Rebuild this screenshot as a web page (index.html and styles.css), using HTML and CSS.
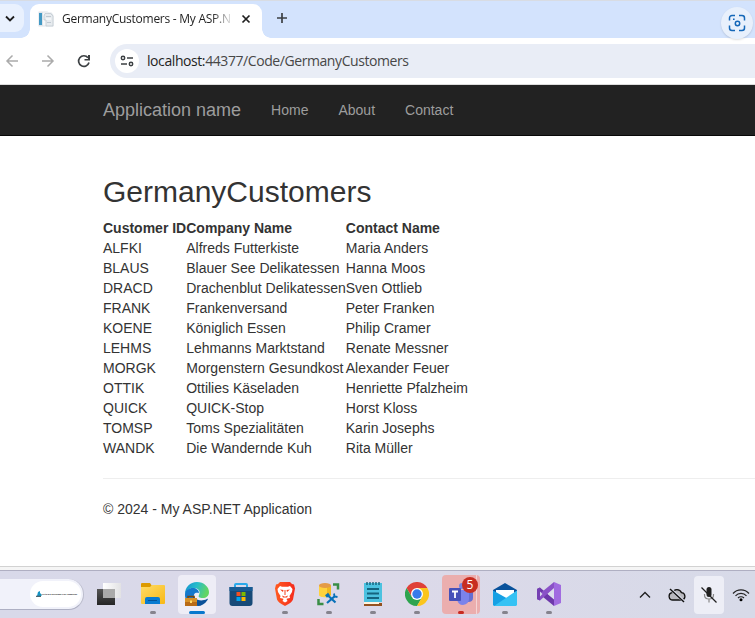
FILE: index.html
```html
<!DOCTYPE html>
<html lang="en">
<head>
<meta charset="utf-8">
<title>GermanyCustomers - My ASP.NET Application</title>
<link rel="stylesheet" href="styles.css">
</head>
<body>
<div class="tabstrip">
  <div class="tab-search"><svg width="24" height="28" viewBox="0 0 24 28"><path d="M6 12.500l4 4 4-4" fill="none" stroke="#1f1f1f" stroke-width="1.800"/></svg></div>
  <div class="tab">
    <svg class="favicon" width="16" height="16" viewBox="0 0 16 16"><path d="M.500.500h9l1 1h3l2 2.500v11.500H.500z" fill="#dfe4e9"/><path d="M1 2h3v12H1z" fill="#4399c4"/><path d="M5 1.500h5v13H5z" fill="#f6f8fa"/><path d="M7 2.500h5.500L15 5v10H8V9H6V5z" fill="#e7ebef" stroke="#bdc5cd" stroke-width=".7"/><path d="M8 5.500h5M9 11.500h4" stroke="#c0c9d1"/><path d="M8 8h5" stroke="#fff"/></svg>
    <span class="tab-title">GermanyCustomers - My ASP.N</span>
    <svg class="close" width="10" height="10" viewBox="0 0 10 10"><path d="M1.500 1.500l7 7m0-7l-7 7" stroke="#1f1f1f" stroke-width="1.700"/></svg>
  </div>
  <svg class="newtab" width="12" height="12" viewBox="0 0 12 12"><path d="M6 1v10M1 6h10" stroke="#3c4043" stroke-width="1.700"/></svg>
</div>
<div class="toolbar">
  <svg width="110" height="46" viewBox="0 0 110 46" fill="none"><g stroke="#ababab" stroke-width="1.500"><path d="M18 23H7m5.500-5.500L7 23l5.500 5.500M42 23h11m-5.500-5.500L53 23l-5.500 5.500"/></g><path d="M88 19.700a5.300 5.300 0 1 0 1 4.800" stroke="#3c4043" stroke-width="1.700"/><path d="M90 17v5.500h-5.500V21H88v-4z" fill="#3c4043"/></svg>
  <div class="address">
    <div class="siteinfo"><svg width="14" height="14" viewBox="0 0 14 14" fill="none" stroke="#3c4043" stroke-width="1.500"><circle cx="3" cy="4" r="1.700"/><path d="M7 4h6M1 10h6"/><circle cx="11" cy="10" r="1.700"/></svg></div>
    <span class="url"><b>localhost:</b>44377/Code/GermanyCustomers</span>
  </div>
</div>
<div class="lens"><svg width="18" height="18" viewBox="0 0 18 18" fill="none" stroke="#1467b8" stroke-width="1.500"><path d="M1.500 6.500V4a2.500 2.500 0 0 1 2.500-2.500h3M11 1.500h3A2.500 2.500 0 0 1 16.500 4v2.500M16.500 11.500V14a2.500 2.500 0 0 1-2.500 2.500h-3M7 16.500H4A2.500 2.500 0 0 1 1.500 14v-2.500"/><circle cx="9.500" cy="9.500" r="2.200"/><path d="M5 5.300h1.600"/></svg></div>
<header class="navbar">
  <a class="brand">Application name</a>
  <nav><a>Home</a><a>About</a><a>Contact</a></nav>
</header>
<main class="content">
  <h2>GermanyCustomers</h2>
  <table>
    <tr><th>Customer ID</th><th>Company Name</th><th>Contact Name</th></tr>
    <tr><td>ALFKI</td><td>Alfreds Futterkiste</td><td>Maria Anders</td></tr>
    <tr><td>BLAUS</td><td>Blauer See Delikatessen</td><td>Hanna Moos</td></tr>
    <tr><td>DRACD</td><td>Drachenblut Delikatessen</td><td>Sven Ottlieb</td></tr>
    <tr><td>FRANK</td><td>Frankenversand</td><td>Peter Franken</td></tr>
    <tr><td>KOENE</td><td>Königlich Essen</td><td>Philip Cramer</td></tr>
    <tr><td>LEHMS</td><td>Lehmanns Marktstand</td><td>Renate Messner</td></tr>
    <tr><td>MORGK</td><td>Morgenstern Gesundkost</td><td>Alexander Feuer</td></tr>
    <tr><td>OTTIK</td><td>Ottilies Käseladen</td><td>Henriette Pfalzheim</td></tr>
    <tr><td>QUICK</td><td>QUICK-Stop</td><td>Horst Kloss</td></tr>
    <tr><td>TOMSP</td><td>Toms Spezialitäten</td><td>Karin Josephs</td></tr>
    <tr><td>WANDK</td><td>Die Wandernde Kuh</td><td>Rita Müller</td></tr>
  </table>
  <hr>
  <footer>© 2024 - My ASP.NET Application</footer>
</main>
<div class="window-edge"></div>
<div class="taskbar">
  <div class="search"><div class="highlight"><svg width="6" height="6" viewBox="0 0 6 6"><path d="M2 1l2-1v2l2 2-1 1H1z" fill="#1593c4"/><path d="M0 4.700h5V6H0z" fill="#4b6470"/></svg><span>Let's Do Everyday Like Someone</span></div></div>
  <div class="apps">
    <div class="app"><svg width="24" height="24" viewBox="0 0 24 24"><defs><linearGradient id="tv" x2="0" y2="1"><stop stop-color="#555"/><stop offset="1" stop-color="#252525"/></linearGradient><linearGradient id="tw"><stop stop-color="#fff"/><stop offset="1" stop-color="#e2e2e4"/></linearGradient></defs><path d="M6 1h18v15H6z" fill="url(#tw)"/><path d="M0 7h18v16H0z" fill="url(#tv)"/><path d="M6 7h12v9H6z" fill="#aaa"/></svg></div>
    <div class="app run"><svg width="24" height="24" viewBox="0 0 24 24"><defs><linearGradient id="fo" x2="1" y2="1"><stop stop-color="#ffdc68"/><stop offset="1" stop-color="#f8b814"/></linearGradient></defs><path d="M0 2q0-1 1-1h8l2 3-2 3H0z" fill="#dc9a00"/><path d="M0 5h9l2-2h12q1 0 1 1v17q0 1-1 1H1q-1 0-1-1z" fill="url(#fo)"/><path d="M4 22v-5q0-2 2-2h11q2 0 2 2v5z" fill="#087bd1"/><path d="M7 18.500h9" stroke="#035397"/></svg></div>
    <div class="app active"><svg width="24" height="24" viewBox="0 0 24 24"><defs><linearGradient id="ed" x2="1" y2=".3"><stop stop-color="#1590cf"/><stop offset=".5" stop-color="#26bccb"/><stop offset="1" stop-color="#62d563"/></linearGradient></defs><path d="M0 12C0 5 5 0 12 0s12 5 12 10c0 4-3 6-6 6-4 0-5-1-4-3 2-4-1-7-5-7-5 0-9 3-9 8z" fill="url(#ed)"/><path d="M0 13c0-5 4-7 8-7 3 0 6 2 6 5-4-1-6 1-5 5 1 5 6 8 9 6-3 2-7 2-10 1C3 22 0 18 0 13z" fill="#1478cc"/><path d="M9 13c0 5 7 7 13 4 1-.5 1 0 .500 1C20 22 16 24 13 24c-5-1-6-8-4-11z" fill="#0b5299"/><path d="M3 16v-1.500h6V16" fill="none" stroke="#774710" stroke-width="1.500"/><path d="M0 16h12v8H0z" fill="#b86b17"/><path d="M0 16h12v4H0z" fill="#d79128"/><path d="M5 18.500h2V21H5z" fill="#ffdb68"/></svg></div>
    <div class="app"><svg width="24" height="24" viewBox="0 0 24 24"><path d="M6 6V3q0-1 1-1h10q1 0 1 1v3" fill="none" stroke="#29a9ea" stroke-width="2"/><path d="M.500 5h23v16q0 3-3 3h-17q-3 0-3-3z" fill="#174a78"/><path d="M.500 5h23v4H.500z" fill="#175b94"/><path d="M7.500 10h4v4h-4z" fill="#f25022"/><path d="M12.500 10h4v4h-4z" fill="#7fba00"/><path d="M7.500 15h4v4h-4z" fill="#00a4ef"/><path d="M12.500 15h4v4h-4z" fill="#ffb900"/></svg></div>
    <div class="app run"><svg width="24" height="24" viewBox="0 0 24 24"><defs><linearGradient id="br"><stop stop-color="#ff5a20"/><stop offset="1" stop-color="#f52b1c"/></linearGradient></defs><path d="M7 0h10l2 2 2 .500 1 4-2 11q-1 3-8 6.500-7-3.500-8-6.500L2 6.500l1-4L5 2z" fill="url(#br)"/><path d="M7 4l2 .700h6l2-.700 2.500 3-.500 3-2.500 4 .500 2-2.500.500-1 .500 1 2-2.500 1.500L9.500 19l1-2-1-.500L7 16l.500-2L5 10l-.500-3z" fill="#fff"/><path d="M7 7.500l3.500.500-.500 2zM17 7.500l-3.500.500.500 2zM11.500 8h1v5h-1zM9 13.500l3 1.200 3-1.200-1 2h-4z" fill="#f4401d"/></svg></div>
    <div class="app run"><svg width="24" height="24" viewBox="0 0 24 24"><path d="M16 2.500h5v5M1.500 17v5h5" fill="none" stroke="#398d45" stroke-width="2.500"/><path d="M2 3.500v9.500c0 3 12 3 12 0V3.500" fill="#ffd23d"/><path d="M10 3.500h4V13l-4 2z" fill="#f1b91f"/><ellipse cx="8" cy="3.500" rx="6" ry="2.500" fill="#e49b47"/><path d="M11.500 14l7 6.500M18 14l-8 7" stroke="#0871b9" stroke-width="2.200"/><path d="M9 14.500l3-2.500" stroke="#0871b9" stroke-width="3"/><path d="M17 11.500l.500 3 3 .500" fill="none" stroke="#0871b9" stroke-width="1.800"/></svg></div>
    <div class="app run"><svg width="24" height="24" viewBox="0 0 24 24"><path d="M3 21h18v3H3z" fill="#94511f"/><path d="M3 19h15v3H3z" fill="#fff4df"/><path d="M3 1h18v19H3z" fill="#4cc2e0"/><path d="M6 0v3M9 0v3M12 0v3M15 0v3M18 0v3" stroke="#17627b" stroke-width="1.400"/><path d="M6 7h12M6 11.500h12M6 16h12" stroke="#14647f" stroke-width="1.800"/></svg></div>
    <div class="app run"><svg width="24" height="24" viewBox="0 0 24 24"><path d="M1.600 6A12 12 0 0 1 22.400 6H12L6.800 15z" fill="#df4138"/><path d="M1.600 6A12 12 0 0 0 12 24l5.200-9H6.800z" fill="#2da44e"/><path d="M22.400 6A12 12 0 0 1 12 24l5.200-9L12 6z" fill="#fbc51d"/><circle cx="12" cy="12" r="6" fill="#fff"/><circle cx="12" cy="12" r="4.700" fill="#367bea"/></svg></div>
    <div class="app teams run"><svg width="24" height="24" viewBox="0 0 24 24"><circle cx="13" cy="4" r="3" fill="#7786e0"/><circle cx="21" cy="6" r="2" fill="#5059c9"/><path d="M17 9h7v7q0 4-5 4z" fill="#656ed2"/><path d="M8 8h12v9q0 5-6 6-5 0-6-6z" fill="#7b83eb"/><rect y="6" width="12" height="13" rx="1" fill="#4651b9"/><path d="M3 9.500h6M6 9v7" stroke="#fff" stroke-width="1.800"/></svg><span class="badge">5</span></div>
    <div class="app run"><svg width="24" height="24" viewBox="0 0 24 24"><path d="M0 8l12-7 12 7v4H0z" fill="#09529b"/><path d="M3 8h18v8H3z" fill="#fff"/><path d="M0 8.500L17 18v6H1l-1-1z" fill="#16a0e4"/><path d="M24 8.500V23l-1 1H1z" fill="#35c2f4"/></svg></div>
    <div class="app run"><svg width="24" height="24" viewBox="0 0 24 24"><path d="M0 7l3-1.500 14 12V24L3 12.500V15l-1 3-2-1z" fill="#6d38aa"/><path d="M0 17l3 1.500L17 6V0L3 11.500 0 7z" fill="#8a52c7"/><path d="M0 7l3-1.500V18.500L0 17z" fill="#7540b3"/><path d="M3 9.500v5L5.500 12z" fill="#dbdced"/><path d="M17 7v10l-6-5z" fill="#dbdced"/><path d="M17 0l7 3v18l-7 3z" fill="#a16be0"/></svg></div>
  </div>
  <div class="tray">
    <svg class="chev" width="12" height="8" viewBox="0 0 12 8"><path d="M1 6.500l5-5 5 5" fill="none" stroke="#202020" stroke-width="1.400"/></svg>
    <svg width="18" height="16" viewBox="0 0 18 16"><path d="M5 13a3.700 3.700 0 0 1-1-7.300C6 1.500 12 1.500 13.500 5.700A3.700 3.700 0 0 1 14 13z" fill="#b9b9bf" stroke="#111" stroke-width="1.300"/><path d="M2.500 2l13 12" stroke="#d7dae8" stroke-width="3"/><path d="M2 2l14 13" stroke="#111" stroke-width="1.400"/></svg>
    <div class="mic"><svg width="18" height="18" viewBox="0 0 18 18"><rect x="6.500" y="1" width="5" height="10" rx="2.500" fill="#202020"/><path d="M4.500 8v1q0 4 4.500 4t4.500-4V8M9 13v3.500" fill="none" stroke="#888" stroke-width="1.200"/><path d="M1.500 1.500l15 15" stroke="#202020" stroke-width="1.200"/></svg></div>
    <svg class="wifi" width="18" height="14" viewBox="0 0 18 14"><g fill="none" stroke="#242424" stroke-width="1.200"><path d="M1 5.500a10.500 10.500 0 0 1 16 0M3.500 7.800a7.300 7.300 0 0 1 11 0M6 10a4.200 4.200 0 0 1 6 0"/></g><circle cx="9" cy="11.800" r="1.500"/></svg>
  </div>
</div>
</body>
</html>
```
FILE: styles.css
```css
* { box-sizing: border-box; }
body { margin: 0; width: 755px; height: 618px; overflow: hidden; display: flex; flex-direction: column; position: relative; background: #fff; color: #333; font: 14px/20px "Liberation Sans", Arial, sans-serif; }
svg { display: block; flex: none; }
.tabstrip { height: 38px; flex: none; background: #d3e3fd; border-top: 1px solid #d8dce3; display: flex; align-items: flex-start; }
.tab-search { width: 24px; height: 28px; margin-top: 3px; background: #e9f1fe; border-radius: 0 9px 9px 0; }
.tab { position: relative; width: 232px; height: 34px; margin: 3px 0 0 6px; padding: 0 11px 4px 8px; background: #fff; border-radius: 9px 9px 0 0; display: flex; align-items: center; }
.tab::before, .tab::after { content: ""; position: absolute; bottom: 0; width: 9px; height: 9px; }
.tab::before { left: -9px; background: radial-gradient(circle at 0 0, transparent 8.500px, #fff 9px); }
.tab::after { right: -9px; background: radial-gradient(circle at 100% 0, transparent 8.500px, #fff 9px); }
.tab-title { margin-left: 8px; white-space: nowrap; color: #1f1f1f; font: 12px/20px "Open Sans", sans-serif; letter-spacing: -.260px; -webkit-mask-image: linear-gradient(90deg, #000 150px, transparent 172px); mask-image: linear-gradient(90deg, #000 150px, transparent 172px); }
.close { margin-left: auto; }
.newtab { margin: 11px 0 0 14px; }
.toolbar { height: 47px; flex: none; border-bottom: 1px solid #ddd; display: flex; }
.address { flex: 1; height: 34px; margin-top: 6px; padding-left: 5px; background: #e9edf6; border-radius: 17px 0 0 17px; display: flex; align-items: center; }
.siteinfo { width: 24px; height: 24px; border-radius: 50%; background: #fff; display: grid; place-items: center; }
.url { margin-left: 8px; color: #474747; font: 14px/20px "Open Sans", sans-serif; letter-spacing: -.420px; white-space: nowrap; }
.url b { font-weight: 400; color: #1f1f1f; }
.lens { position: absolute; left: 721px; top: 7px; width: 32px; height: 32px; border-radius: 50%; background: #e8f0fc; box-shadow: 0 1px 2px #0002; display: grid; place-items: center; }
.navbar { height: 51px; flex: none; padding-left: 103px; background: #222; border-bottom: 1px solid #080808; display: flex; align-items: center; color: #9d9d9d; }
.brand { font-size: 18px; }
nav { display: flex; gap: 30px; margin-left: 30px; }
.content { flex: 1; padding: 39px 0 0 103px; }
h2 { margin: 0 0 10px; font-size: 30px; line-height: 33px; font-weight: 500; }
table { border-collapse: collapse; }
th, td { padding: 0; text-align: left; white-space: nowrap; }
hr { height: 1px; margin: 20px 0; border: 0; background: #eee; }
.window-edge { height: 4px; flex: none; border-top: 1px solid #d2d2d2; background: #f5f5f5; }
.taskbar { height: 48px; flex: none; border-top: 1px solid #afafc2; background: linear-gradient(90deg, #d8d9e9, #dcd9e9 50%, #d7dae8); display: flex; }
.search { width: 84px; height: 31px; margin-top: 8px; padding: 2px 2px 2px 30px; background: #f1f2fa; border-radius: 0 16px 16px 0; border-bottom: 1px solid #aeb0c3; border-right: 1px solid #bbbccc; }
.highlight { width: 51px; height: 26px; background: #fff; border-radius: 13px; display: flex; align-items: center; padding-left: 6px; }
.highlight span { font: bold 2.250px/4px "Liberation Sans", sans-serif; white-space: nowrap; color: #222; }
.apps { display: flex; gap: 6px; margin: 4px 0 0 6px; }
.app { position: relative; width: 38px; height: 39px; border-radius: 4px; display: flex; justify-content: center; padding-top: 7px; }
.active { background: #eeedf6; }
.run::after, .active::after { content: ""; position: absolute; bottom: 0; left: 16px; width: 6px; height: 3px; border-radius: 2px; background: #85838d; }
.active::after { left: 11px; width: 16px; background: #0878cd; }
.teams { background: #ebaeae; }
.teams::before { content: ""; position: absolute; left: 34px; top: 0; width: 5px; height: 39px; border-left: 1px solid #f4d5d5; }
.teams::after { background: #c72a20; }
.badge { position: absolute; left: 20px; top: 2px; width: 16px; height: 16px; border-radius: 50%; background: #c82d21; color: #fff; font: 12px/16px "Open Sans", sans-serif; text-align: center; }
.tray { margin-left: auto; margin-right: 5px; display: flex; align-items: center; }
.chev { margin-right: 17px; }
.mic { width: 30px; height: 38px; margin: 0 8px 0 8px; border-radius: 4px; background: #edeef6; display: grid; place-items: center; }
```
